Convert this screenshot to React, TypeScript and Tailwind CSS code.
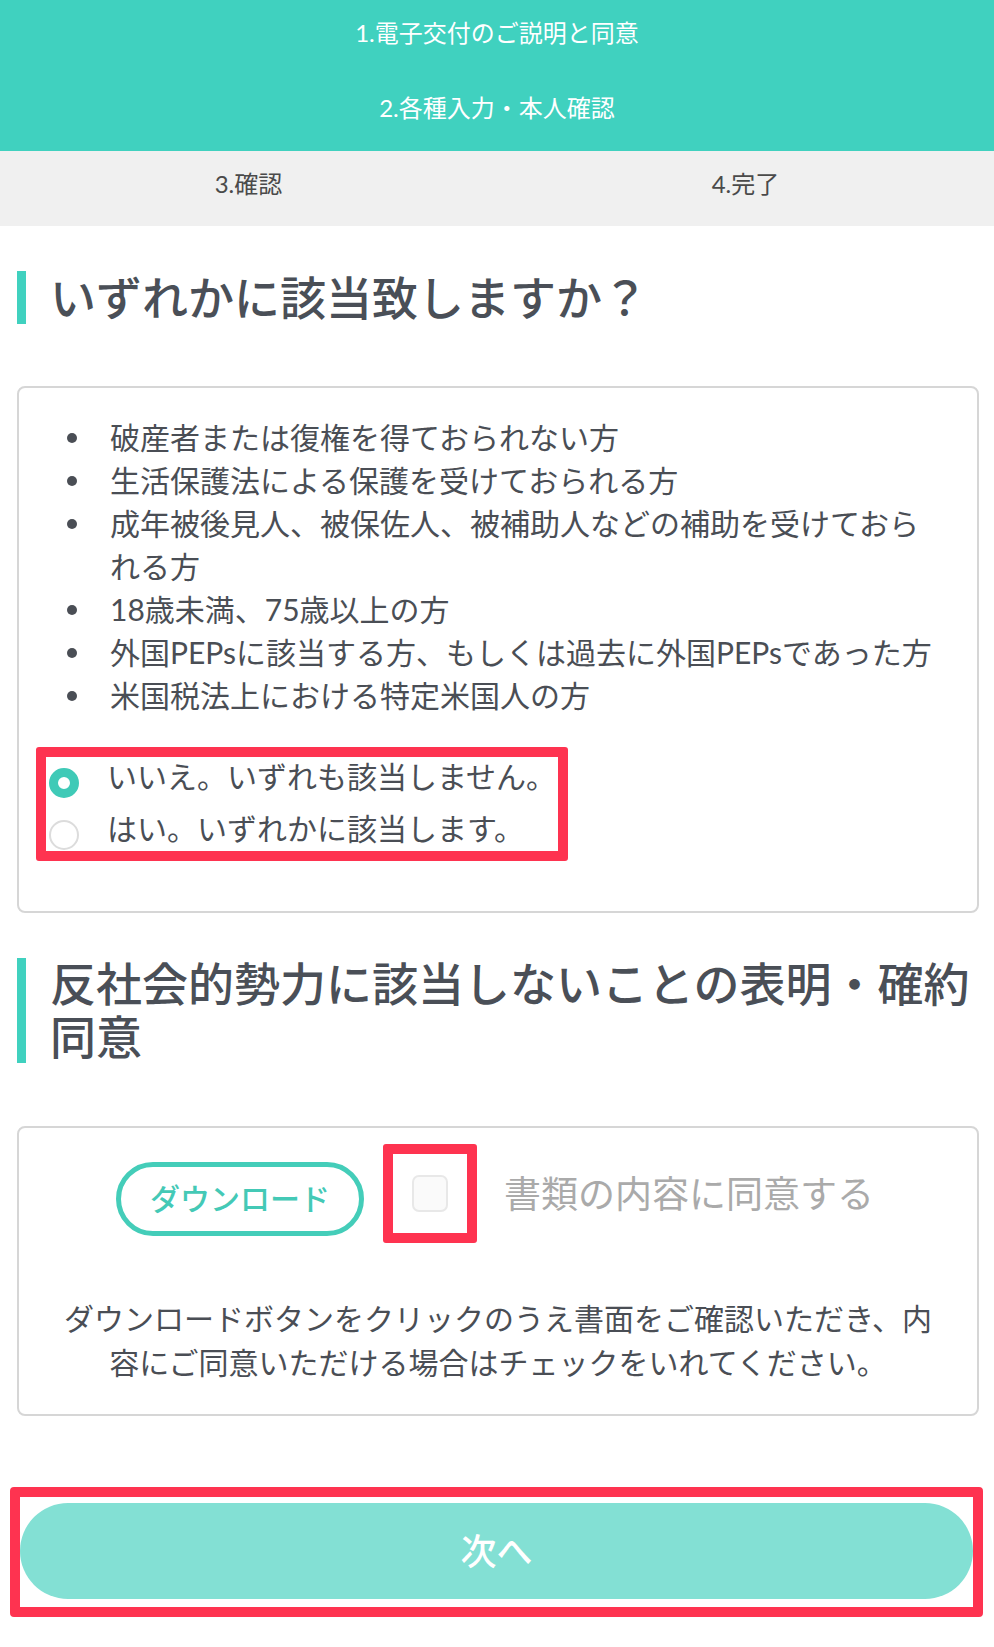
const steps = ["1.電子交付のご説明と同意", "2.各種入力・本人確認"];

const conditions = [
  "破産者または復権を得ておられない方",
  "生活保護法による保護を受けておられる方",
  "成年被後見人、被保佐人、被補助人などの補助を受けておられる方",
  "18歳未満、75歳以上の方",
  "外国PEPsに該当する方、もしくは過去に外国PEPsであった方",
  "米国税法上における特定米国人の方",
];

function SectionTitle({ children, lineHeight }: { children: React.ReactNode; lineHeight: string }) {
  return (
    <div className="flex">
      <div className="w-[9px] shrink-0 bg-[#40d1bf]" />
      <h2 className={`ml-[24px] text-[46px] font-medium text-[#4a4f57] ${lineHeight}`}>
        {children}
      </h2>
    </div>
  );
}

export default function App() {
  return (
    <div className="min-h-[1647px] bg-white font-[Lato,'Noto_Sans_CJK_JP',sans-serif] text-[#4a4e55]">
      {/* step indicator */}
      <div className="bg-[#40d1bf] text-[24px] text-white">
        <div className="flex h-[75px] items-center justify-center pb-[10px]">{steps[0]}</div>
        <div className="flex h-[76px] items-center justify-center pb-[10px]">{steps[1]}</div>
      </div>
      <div className="grid h-[75px] grid-cols-2 bg-[#f0f0f0] text-[24px] text-[#4a4a4a]">
        <div className="flex items-center justify-center pb-[10px]">3.確認</div>
        <div className="flex items-center justify-center pb-[10px]">4.完了</div>
      </div>

      <div className="pl-[17px] pr-[15px]">
        <div className="mt-[45px]">
          <SectionTitle lineHeight="leading-[53px]">いずれかに該当致しますか？</SectionTitle>
        </div>

        <div className="mt-[62px] rounded-[8px] border-2 border-[#d6d6d6] pb-[50px] pl-[17px] pr-[30px] pt-[28px]">
          <ul className="text-[30px] leading-[43px]">
            {conditions.map((c) => (
              <li key={c} className="flex items-start">
                <span className="ml-[31px] mt-[17px] h-[10px] w-[10px] shrink-0 rounded-full bg-[#4a4e55]" />
                <span className="ml-[33px]">{c}</span>
              </li>
            ))}
          </ul>

          <div className="mt-[30px] h-[114px] w-[532px] rounded-[3px] border-[10px] border-[#fe3350] pl-[3px] text-[30px]">
            <label className="flex h-[52px] items-center">
              <span className="h-[30px] w-[30px] shrink-0 rounded-full border-[9px] border-[#3fcab7] bg-white" />
              <span className="mb-[14px] ml-[28px]">いいえ。いずれも該当しません。</span>
            </label>
            <label className="flex h-[52px] items-center">
              <span className="h-[30px] w-[30px] shrink-0 rounded-full border-2 border-[#dcdcdc] bg-white" />
              <span className="mb-[14px] ml-[28px]">はい。いずれかに該当します。</span>
            </label>
          </div>
        </div>

        <div className="mt-[45px]">
          <SectionTitle lineHeight="leading-[52.5px]">反社会的勢力に該当しないことの表明・確約同意</SectionTitle>
        </div>

        <div className="mt-[63px] rounded-[8px] border-2 border-[#d6d6d6] px-[40px] pb-[30px] pt-[16px]">
          <div className="flex items-center">
            <button className="ml-[57px] mt-[10px] flex h-[74px] w-[248px] shrink-0 items-center justify-center rounded-full border-[5px] border-[#44cdb9] text-[30px] font-medium text-[#44c9b6]">
              ダウンロード
            </button>
            <div className="ml-[19px] flex h-[99px] w-[94px] shrink-0 items-center justify-center rounded-[3px] border-[10px] border-[#fe3350]">
              <span className="h-[37px] w-[36px] rounded-[7px] border-2 border-[#e8e8e8] bg-[#fafafa]" />
            </div>
            <span className="ml-[27px] whitespace-nowrap text-[37px] text-[#aaaaaa]">書類の内容に同意する</span>
          </div>
          <p className="mt-[53px] text-center text-[30px] leading-[44px]">
            ダウンロードボタンをクリックのうえ書面をご確認いただき、内容にご同意いただける場合はチェックをいれてください。
          </p>
        </div>
      </div>

      <div className="mt-[71px] pl-[10px] pr-[11px]">
        <div className="rounded-[4px] border-[10px] border-[#fe3350] pb-[8px] pt-[6px]">
          <button className="flex h-[96px] w-full items-center justify-center rounded-full bg-[#83e0d4] text-[36px] font-medium text-white">
            次へ
          </button>
        </div>
      </div>
    </div>
  );
}
